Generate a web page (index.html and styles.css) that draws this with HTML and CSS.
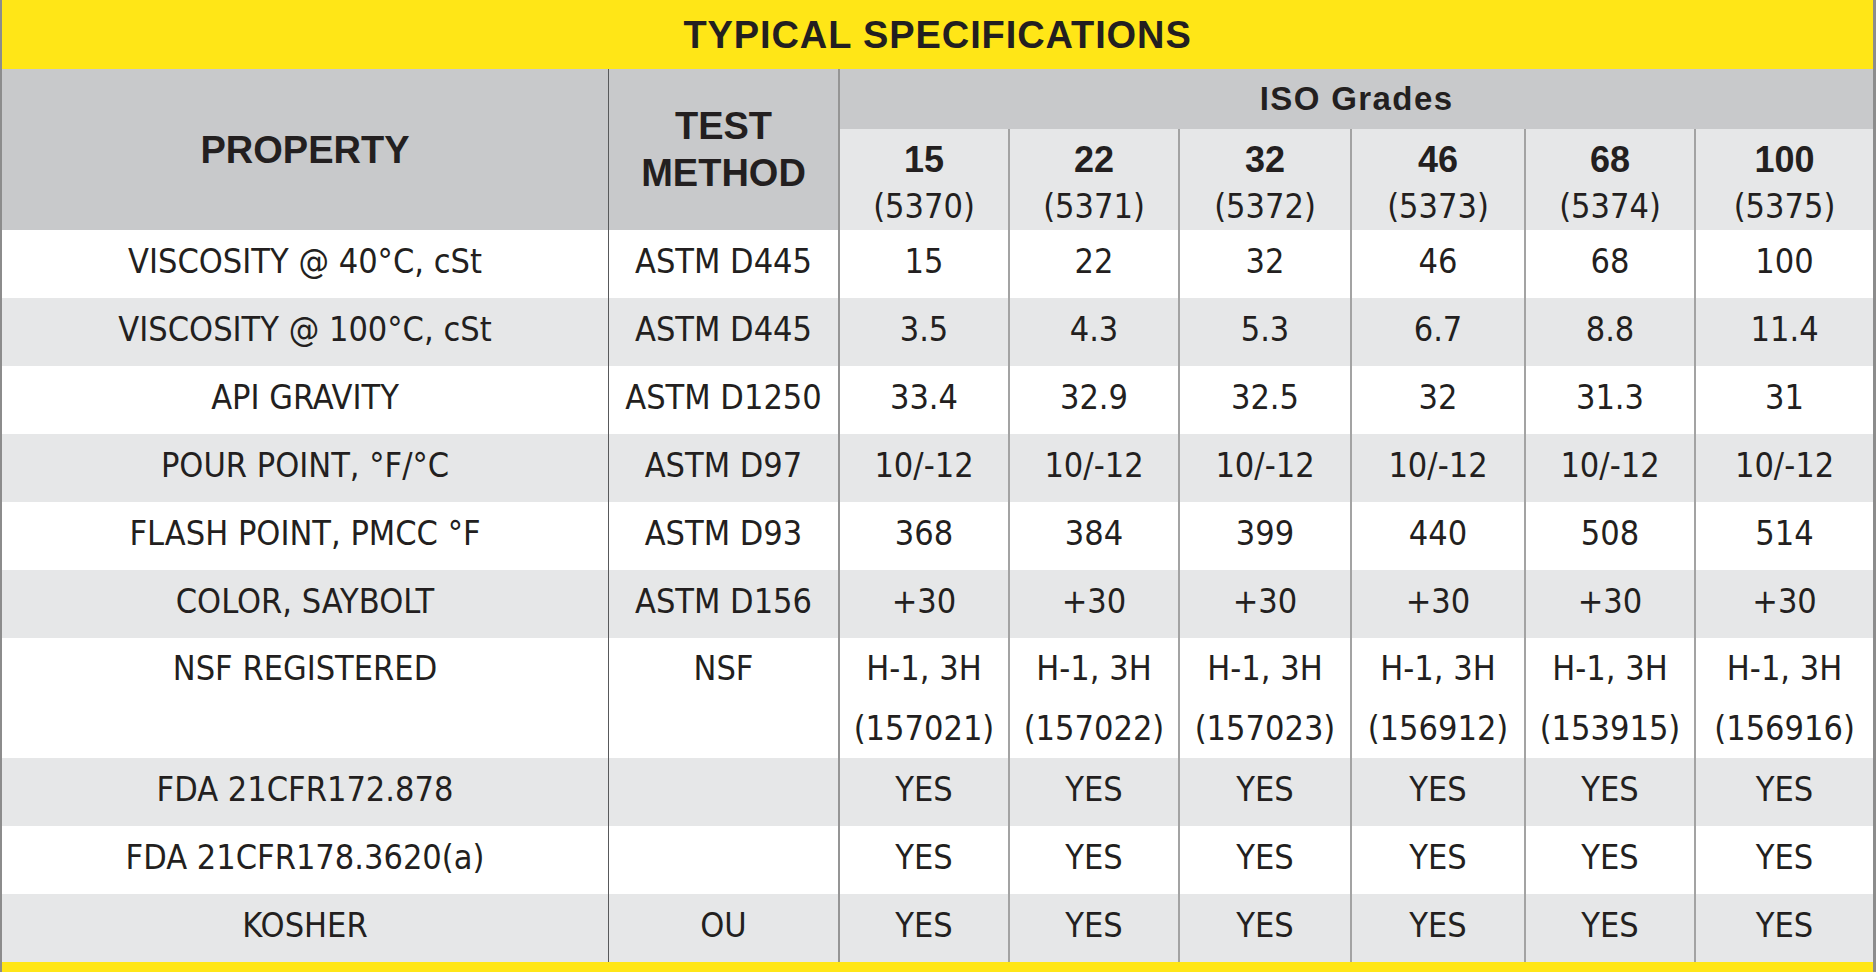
FILE: index.html
```html
<!DOCTYPE html>
<html lang="en">
<head>
<meta charset="utf-8">
<title>Typical Specifications</title>
<link rel="stylesheet" href="styles.css">
</head>
<body>
<table class="spec">
  <colgroup>
    <col class="c-prop"><col class="c-test">
    <col class="c-g1"><col class="c-g2"><col class="c-g3"><col class="c-g4"><col class="c-g5"><col class="c-g6">
  </colgroup>
  <thead>
    <tr class="title-row"><th colspan="8" class="title">TYPICAL SPECIFICATIONS</th></tr>
    <tr class="iso-row">
      <th rowspan="2" class="h-prop">PROPERTY</th>
      <th rowspan="2" class="h-test">TEST<br>METHOD</th>
      <th colspan="6" class="h-iso">ISO Grades</th>
    </tr>
    <tr class="grade-row">
      <th class="g"><span class="num">15</span><span class="sku">(5370)</span></th>
      <th class="g"><span class="num">22</span><span class="sku">(5371)</span></th>
      <th class="g"><span class="num">32</span><span class="sku">(5372)</span></th>
      <th class="g"><span class="num">46</span><span class="sku">(5373)</span></th>
      <th class="g"><span class="num">68</span><span class="sku">(5374)</span></th>
      <th class="g last"><span class="num">100</span><span class="sku">(5375)</span></th>
    </tr>
  </thead>
  <tbody>
    <tr class="r">
      <td class="p">VISCOSITY @ 40°C, cSt</td><td class="t">ASTM D445</td>
      <td>15</td><td>22</td><td>32</td><td>46</td><td>68</td><td class="last">100</td>
    </tr>
    <tr class="r alt">
      <td class="p">VISCOSITY @ 100°C, cSt</td><td class="t">ASTM D445</td>
      <td>3.5</td><td>4.3</td><td>5.3</td><td>6.7</td><td>8.8</td><td class="last">11.4</td>
    </tr>
    <tr class="r">
      <td class="p">API GRAVITY</td><td class="t">ASTM D1250</td>
      <td>33.4</td><td>32.9</td><td>32.5</td><td>32</td><td>31.3</td><td class="last">31</td>
    </tr>
    <tr class="r alt">
      <td class="p">POUR POINT, °F/°C</td><td class="t">ASTM D97</td>
      <td>10/-12</td><td>10/-12</td><td>10/-12</td><td>10/-12</td><td>10/-12</td><td class="last">10/-12</td>
    </tr>
    <tr class="r">
      <td class="p">FLASH POINT, PMCC °F</td><td class="t">ASTM D93</td>
      <td>368</td><td>384</td><td>399</td><td>440</td><td>508</td><td class="last">514</td>
    </tr>
    <tr class="r alt">
      <td class="p">COLOR, SAYBOLT</td><td class="t">ASTM D156</td>
      <td>+30</td><td>+30</td><td>+30</td><td>+30</td><td>+30</td><td class="last">+30</td>
    </tr>
    <tr class="r tall">
      <td class="p">NSF REGISTERED</td><td class="t">NSF</td>
      <td>H-1, 3H<br>(157021)</td><td>H-1, 3H<br>(157022)</td><td>H-1, 3H<br>(157023)</td><td>H-1, 3H<br>(156912)</td><td>H-1, 3H<br>(153915)</td><td class="last">H-1, 3H<br>(156916)</td>
    </tr>
    <tr class="r alt">
      <td class="p">FDA 21CFR172.878</td><td class="t"></td>
      <td>YES</td><td>YES</td><td>YES</td><td>YES</td><td>YES</td><td class="last">YES</td>
    </tr>
    <tr class="r">
      <td class="p">FDA 21CFR178.3620(a)</td><td class="t"></td>
      <td>YES</td><td>YES</td><td>YES</td><td>YES</td><td>YES</td><td class="last">YES</td>
    </tr>
    <tr class="r alt">
      <td class="p">KOSHER</td><td class="t">OU</td>
      <td>YES</td><td>YES</td><td>YES</td><td>YES</td><td>YES</td><td class="last">YES</td>
    </tr>
  </tbody>
  <tfoot>
    <tr class="foot-row"><td colspan="8" class="foot"></td></tr>
  </tfoot>
</table>
</body>
</html>
```

FILE: styles.css
```css
html, body {
  margin: 0;
  padding: 0;
  background: #ffffff;
}

.spec {
  width: 1876px;
  table-layout: fixed;
  border-collapse: separate;
  border-spacing: 0;
  border-left: 2px solid #8c8c8c;
  border-right: 3px solid #8c8c8c;
  color: #231f20;
  font-family: "Liberation Sans Narrow", "DejaVu Sans Condensed", "Liberation Sans", sans-serif;
}

.c-prop { width: 607px; }
.c-test { width: 231px; }
.c-g1 { width: 170px; }
.c-g2 { width: 170px; }
.c-g3 { width: 172px; }
.c-g4 { width: 174px; }
.c-g5 { width: 170px; }
.c-g6 { width: 177px; }

.spec th,
.spec td {
  box-sizing: border-box;
  padding: 0;
  text-align: center;
  white-space: nowrap;
}

/* Title band */
.title {
  height: 69px;
  background: #ffe617;
  font-family: "Liberation Sans", sans-serif;
  font-weight: 700;
  font-size: 38px;
  letter-spacing: 0.9px;
  line-height: 40px;
  padding-bottom: 7px;
  vertical-align: middle;
}

/* Header */
.iso-row th {
  height: 60px;
}
.h-prop,
.h-test,
.h-iso {
  background: #c8c9cb;
  font-family: "Liberation Sans", sans-serif;
  font-weight: 700;
  vertical-align: middle;
}
.h-prop {
  font-size: 38px;
  line-height: 40px;
  border-right: 1px solid #58595b;
}
.h-test {
  font-size: 38px;
  line-height: 47px;
  border-right: 2px solid #959595;
}
.h-iso {
  font-size: 33px;
  letter-spacing: 1.4px;
  line-height: 40px;
  padding-top: 3px;
}

.grade-row th {
  height: 101px;
  background: #e6e7e8;
  border-right: 2px solid #a3a3a3;
  vertical-align: middle;
  padding-top: 6px;
}
.grade-row th.last {
  border-right: 0;
}
.num {
  display: block;
  font-family: "Liberation Sans", sans-serif;
  font-weight: 700;
  font-size: 36px;
  line-height: 47px;
}
.sku {
  display: block;
  font-weight: 400;
  font-size: 34px;
  line-height: 47px;
}

/* Body rows */
.r td {
  height: 68px;
  font-size: 34px;
  line-height: 40px;
  vertical-align: middle;
  padding-bottom: 6px;
  background: #ffffff;
  border-right: 2px solid #a3a3a3;
}
.r.alt td {
  background: #e6e7e8;
}
.r td.p {
  border-right: 1px solid #58595b;
}
.r td.t {
  border-right: 2px solid #959595;
}
.r td.last {
  border-right: 0;
}

.r.tall td {
  height: 118px;
  line-height: 60px;
  vertical-align: top;
  padding-bottom: 0;
}

/* Footer band */
.foot {
  height: 13px;
  background: #ffe617;
}
```
